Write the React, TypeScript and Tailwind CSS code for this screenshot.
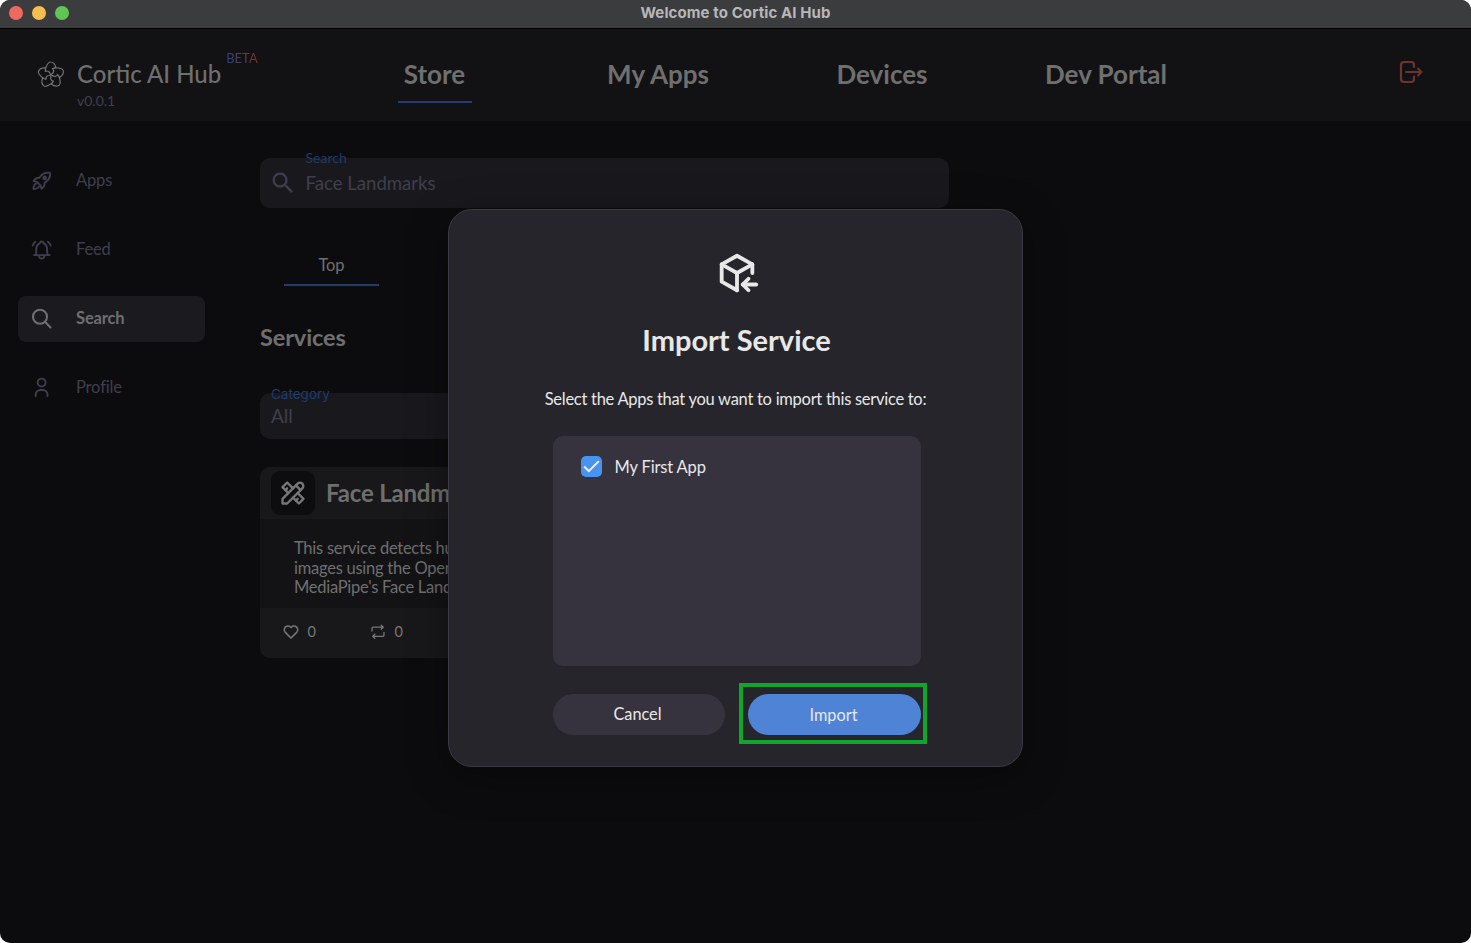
import { MdSearch } from "react-icons/md";
import { TbPackageImport, TbTools } from "react-icons/tb";
import { BiHeart } from "react-icons/bi";
import type { ReactNode } from "react";

const petals = [0, 72, 144, 216, 288];

function Logo() {
  return (
    <svg className="h-[30px] w-[30px]" viewBox="-15 -15 30 30" fill="none" stroke="#747474" strokeWidth="1.2" strokeLinejoin="round" strokeLinecap="round">
      {petals.map((a) => (
        <path key={a} transform={`rotate(${a})`} d="M-5.600 -6.200 C-4.400 -9.600 -2.800 -13 -0.600 -13 C2 -13 4.200 -10.400 5 -7.400 L1.600 -6.400 C3.600 -4.400 2.800 -2.600 0.400 -0.600" />
      ))}
    </svg>
  );
}

function RocketIcon() {
  return (
    <svg className="h-6 w-6" viewBox="0 0 24 24" fill="none" stroke="currentColor" strokeWidth="1.9" strokeLinejoin="round" strokeLinecap="round">
      <path d="M19.900 3.800c-3.800-.7-7 .5-9.200 3.200l-1.300 1.700-3.300.5-2.600 2.600 3.400 1 3.600 3.600 1 3.400 2.600-2.600.5-3.300 1.700-1.300c2.900-2.300 4.200-5.200 3.600-8.800Z" />
      <circle cx="14.700" cy="8.900" r="1.400" />
      <path d="M6 14.700c-2 .7-2.400 2.600-2.500 5.300 2.700-.1 4.700-.5 5.400-2.500" />
    </svg>
  );
}

function BellIcon() {
  return (
    <svg className="h-6 w-6" viewBox="0 0 24 24" fill="none" stroke="currentColor" strokeWidth="1.9" strokeLinejoin="round" strokeLinecap="round">
      <path d="M4 17.100h15.600" />
      <path d="M5.700 16.900c.8-1.600.5-4 .6-6.300.1-3 1.900-4.800 3.900-5.800 0-1.900 3-1.900 3 0 2 1 3.800 2.800 3.900 5.800.1 2.300-.2 4.700.6 6.300" />
      <path d="M9 18.100c.4 1.700 1.300 2.500 2.700 2.500s2.300-.8 2.700-2.500" />
      <path d="M5.500 3.700c-1.500.9-2.500 2.200-2.800 3.900M17.900 3.700c1.500.9 2.500 2.200 2.800 3.900" />
    </svg>
  );
}

function LensIcon() {
  return (
    <svg className="h-6 w-6" viewBox="0 0 24 24" fill="none" stroke="currentColor" strokeWidth="2.1" strokeLinecap="round">
      <circle cx="10" cy="9.800" r="7" />
      <path d="m15.200 15 5.300 5.400" />
    </svg>
  );
}

function PersonIcon() {
  return (
    <svg className="h-6 w-6" viewBox="0 0 24 24" fill="none" stroke="currentColor" strokeWidth="1.9" strokeLinecap="round">
      <circle cx="11.600" cy="6.600" r="4" />
      <path d="M5.700 20.300v-1.800a4.500 4.500 0 0 1 4.500-4.500h2.800a4.500 4.500 0 0 1 4.500 4.500v1.800" />
    </svg>
  );
}

function RepeatIcon() {
  return (
    <svg className="h-[18px] w-[18px]" viewBox="0 0 18 18" fill="none" stroke="currentColor" strokeWidth="1.300" strokeLinejoin="round" strokeLinecap="round">
      <path d="M3 8V5.400a1.200 1.200 0 0 1 1.200-1.200h10M12.200 2.200l2 2-2 2" />
      <path d="M15 9.500v2.600a1.200 1.200 0 0 1-1.200 1.200h-10M5.800 11.300l-2 2 2 2" />
    </svg>
  );
}

function LogoutIcon() {
  return (
    <svg className="h-6 w-6" viewBox="0 0 24 24" fill="none" stroke="#6f332c" strokeWidth="2.2" strokeLinejoin="round" strokeLinecap="round">
      <path d="M15 7V5a3 3 0 0 0-3-3H5a3 3 0 0 0-3 3v14a3 3 0 0 0 3 3h7a3 3 0 0 0 3-3v-2.500" />
      <path d="M7 12h15.500M19 8.500l3.500 3.500-3.500 3.500" strokeWidth="1.900" />
    </svg>
  );
}

const tabs = ["Store", "My Apps", "Devices", "Dev Portal"];

const menu: { label: string; icon: ReactNode }[] = [
  { label: "Apps", icon: <RocketIcon /> },
  { label: "Feed", icon: <BellIcon /> },
  { label: "Search", icon: <LensIcon /> },
  { label: "Profile", icon: <PersonIcon /> },
];

function TitleBar() {
  return (
    <div className="flex h-[29px] shrink-0 items-center border-b border-black bg-[#3b3c3e]">
      <div className="flex w-[200px] gap-[9px] pl-[9px] pb-[2px]">
        <span className="h-[14px] w-[14px] rounded-full bg-[#ee6a5f]" />
        <span className="h-[14px] w-[14px] rounded-full bg-[#f5be4f]" />
        <span className="h-[14px] w-[14px] rounded-full bg-[#61c554]" />
      </div>
      <div className="flex-1 pb-[3px] text-center font-['Inter',sans-serif] text-[15px] font-bold leading-5 tracking-[0.1px] text-[#b7b7b8]">Welcome to Cortic AI Hub</div>
      <div className="w-[200px]" />
    </div>
  );
}

function Header() {
  return (
    <header className="flex h-[92px] shrink-0 bg-[#121214]">
      <div className="flex w-[322px] pl-[36px] pt-[31px]">
        <Logo />
        <div className="-mt-px ml-[11px]">
          <div className="text-[24px] font-medium leading-[29px] text-[#6f6f6f]">Cortic AI Hub</div>
          <div className="mt-[4px] text-[14px] leading-[18px] text-[#403e4d]">v0.0.1</div>
        </div>
        <div className="-mt-[10px] ml-[5px] h-4 bg-linear-to-r from-[#1f4478] to-[#7a2b2b] bg-clip-text text-[13px] leading-4 text-transparent">BETA</div>
      </div>
      <nav className="grid w-[896px] grid-cols-4">
        {tabs.map((t) => (
          <div key={t} className={t === "Store" ? "flex justify-center pl-[2px] pt-[29px]" : "flex justify-center pt-[29px]"}>
            <div className={t === "Store" ? "h-[45px] border-b-2 border-[#213e72] pl-[6px] pr-[7px] text-[26px] font-bold leading-[33px] text-[#6f6f6f]" : "text-[26px] font-bold leading-[33px] text-[#6f6f6f]"}>{t}</div>
          </div>
        ))}
      </nav>
      <div className="flex flex-1 justify-end pr-[48px] pt-[31px]">
        <LogoutIcon />
      </div>
    </header>
  );
}

function Sidebar() {
  return (
    <aside className="flex w-[205px] shrink-0 flex-col gap-[23px] pl-[18px] pt-[37px]">
      {menu.map(({ label, icon }) => (
        <div
          key={label}
          className={
            label === "Search"
              ? "flex h-[46px] items-center gap-[22px] rounded-lg bg-[#1a1a1f] pl-[12px] font-bold text-[#6f6f6f]"
              : "flex h-[46px] items-center gap-[22px] rounded-lg pl-[12px] text-[#403e4d]"
          }
        >
          {icon}
          <span className="pb-[2px] text-[16.500px] leading-5 tracking-[-0.15px]">{label}</span>
        </div>
      ))}
    </aside>
  );
}

function ServiceCard() {
  return (
    <div className="mt-[28px] h-[191px] w-[340px] overflow-hidden rounded-[10px] bg-[#18181a]">
      <div className="flex h-[52px] items-center pl-[11px]">
        <div className="flex h-11 w-11 items-center justify-center rounded-[9px] bg-[#0d0d0f] text-[#777777]">
          <TbTools className="h-[28px] w-[28px]" />
        </div>
        <div className="ml-[11px] whitespace-nowrap text-[24px] font-bold leading-7 tracking-[-0.2px] text-[#6f6f6f]">Face Landmarks</div>
      </div>
      <div className="h-[89px] whitespace-nowrap bg-[#131315] pl-[34px] pt-[20px] text-[16.500px] leading-[19.500px] tracking-[-0.250px] text-[#6f6f6f]">
        <p>This service detects human faces in</p>
        <p>images using the OpenCV and</p>
        <p>MediaPipe's Face Landmarks</p>
      </div>
      <div className="flex items-center pl-[21.500px] pt-[13px] text-[14.500px] leading-5 text-[#777777]">
        <BiHeart className="h-[18px] w-[18px]" />
        <span className="ml-[8px] w-[61px]">0</span>
        <RepeatIcon />
        <span className="ml-[8px] pt-px">0</span>
      </div>
    </div>
  );
}

function SearchPage() {
  return (
    <main className="ml-[55px] w-[689px] pt-[37px]">
      <div className="relative flex h-[50px] items-center rounded-[10px] bg-[#19191d] pl-[8.500px] text-[#403e4d]">
        <MdSearch className="h-[28px] w-[28px]" />
        <span className="ml-[9px] text-[18.600px] leading-6">Face Landmarks</span>
        <span className="absolute left-[45.500px] top-[-9px] text-[14px] leading-[18px] text-[#1f3b6c]">Search</span>
      </div>
      <div className="ml-[24px] mt-[46px] h-[32px] w-[95px] border-b-2 border-[#213e6b] text-center text-[16.500px] leading-[22px] tracking-[-0.1px] text-[#6f6f6f]">Top</div>
      <h2 className="mt-[36px] text-[23.500px] font-bold leading-[30px] tracking-[-0.1px] text-[#6f6f6f]">Services</h2>
      <div className="relative mt-[41px] flex h-[46px] items-center rounded-[10px] bg-[#19191d] pl-[11px] text-[19px] leading-6 text-[#403e4d]">
        All
        <span className="absolute left-[11px] top-[-8px] font-['Inter',sans-serif] text-[13.500px] leading-[18px] text-[#1f3b6c]">Category</span>
      </div>
      <ServiceCard />
    </main>
  );
}

function ImportDialog() {
  return (
    <div className="absolute left-[448px] top-[209px] flex h-[558px] w-[575px] flex-col items-center rounded-[24px] border border-[#3b3945] bg-[#26252b] pl-[2px] pt-[40px] text-[#e8e8e8] shadow-[0_10px_40px_rgba(0,0,0,0.35)]">
      <TbPackageImport className="h-[46px] w-[46px]" />
      <h1 className="mt-[26px] text-[29px] font-bold leading-9">Import Service</h1>
      <p className="mt-[31px] pr-[2px] text-[16.500px] leading-5 tracking-[-0.280px]">Select the Apps that you want to import this service to:</p>
      <div className="mt-[27px] h-[230px] w-[368px] shrink-0 rounded-[10px] bg-[#36333f] pl-[28px] pt-[20px]">
        <div className="flex items-center">
          <span className="flex h-[21px] w-[21px] items-center justify-center rounded-[5px] bg-[#4893ef]">
            <svg className="h-[21px] w-[21px]" viewBox="0 0 21 21" fill="none" stroke="#f0f0f0" strokeWidth="2">
              <path d="m3.200 10.500 4.600 4.600 10-10" />
            </svg>
          </span>
          <span className="ml-[13px] text-[16.500px] leading-5 tracking-[-0.15px]">My First App</span>
        </div>
      </div>
      <div className="mt-[28px] flex w-[368px] justify-between text-[16.300px] leading-5">
        <button className="h-[41px] w-[172px] rounded-full bg-[#36333f] pb-[2px] pr-[2px]">Cancel</button>
        <button className="h-[41px] w-[173px] rounded-full bg-[#4e83d6] pr-px">Import</button>
      </div>
      <div className="absolute left-[290px] top-[473px] h-[61px] w-[188px] border-4 border-[#10a62e]" />
    </div>
  );
}

export default function App() {
  return (
    <div className="bg-white">
      <div className="relative flex h-[943px] w-[1471px] flex-col overflow-hidden rounded-[10px] bg-[#0c0c0e] font-['Lato',sans-serif]">
        <TitleBar />
        <Header />
        <div className="flex flex-1">
          <Sidebar />
          <SearchPage />
        </div>
        <ImportDialog />
      </div>
    </div>
  );
}
